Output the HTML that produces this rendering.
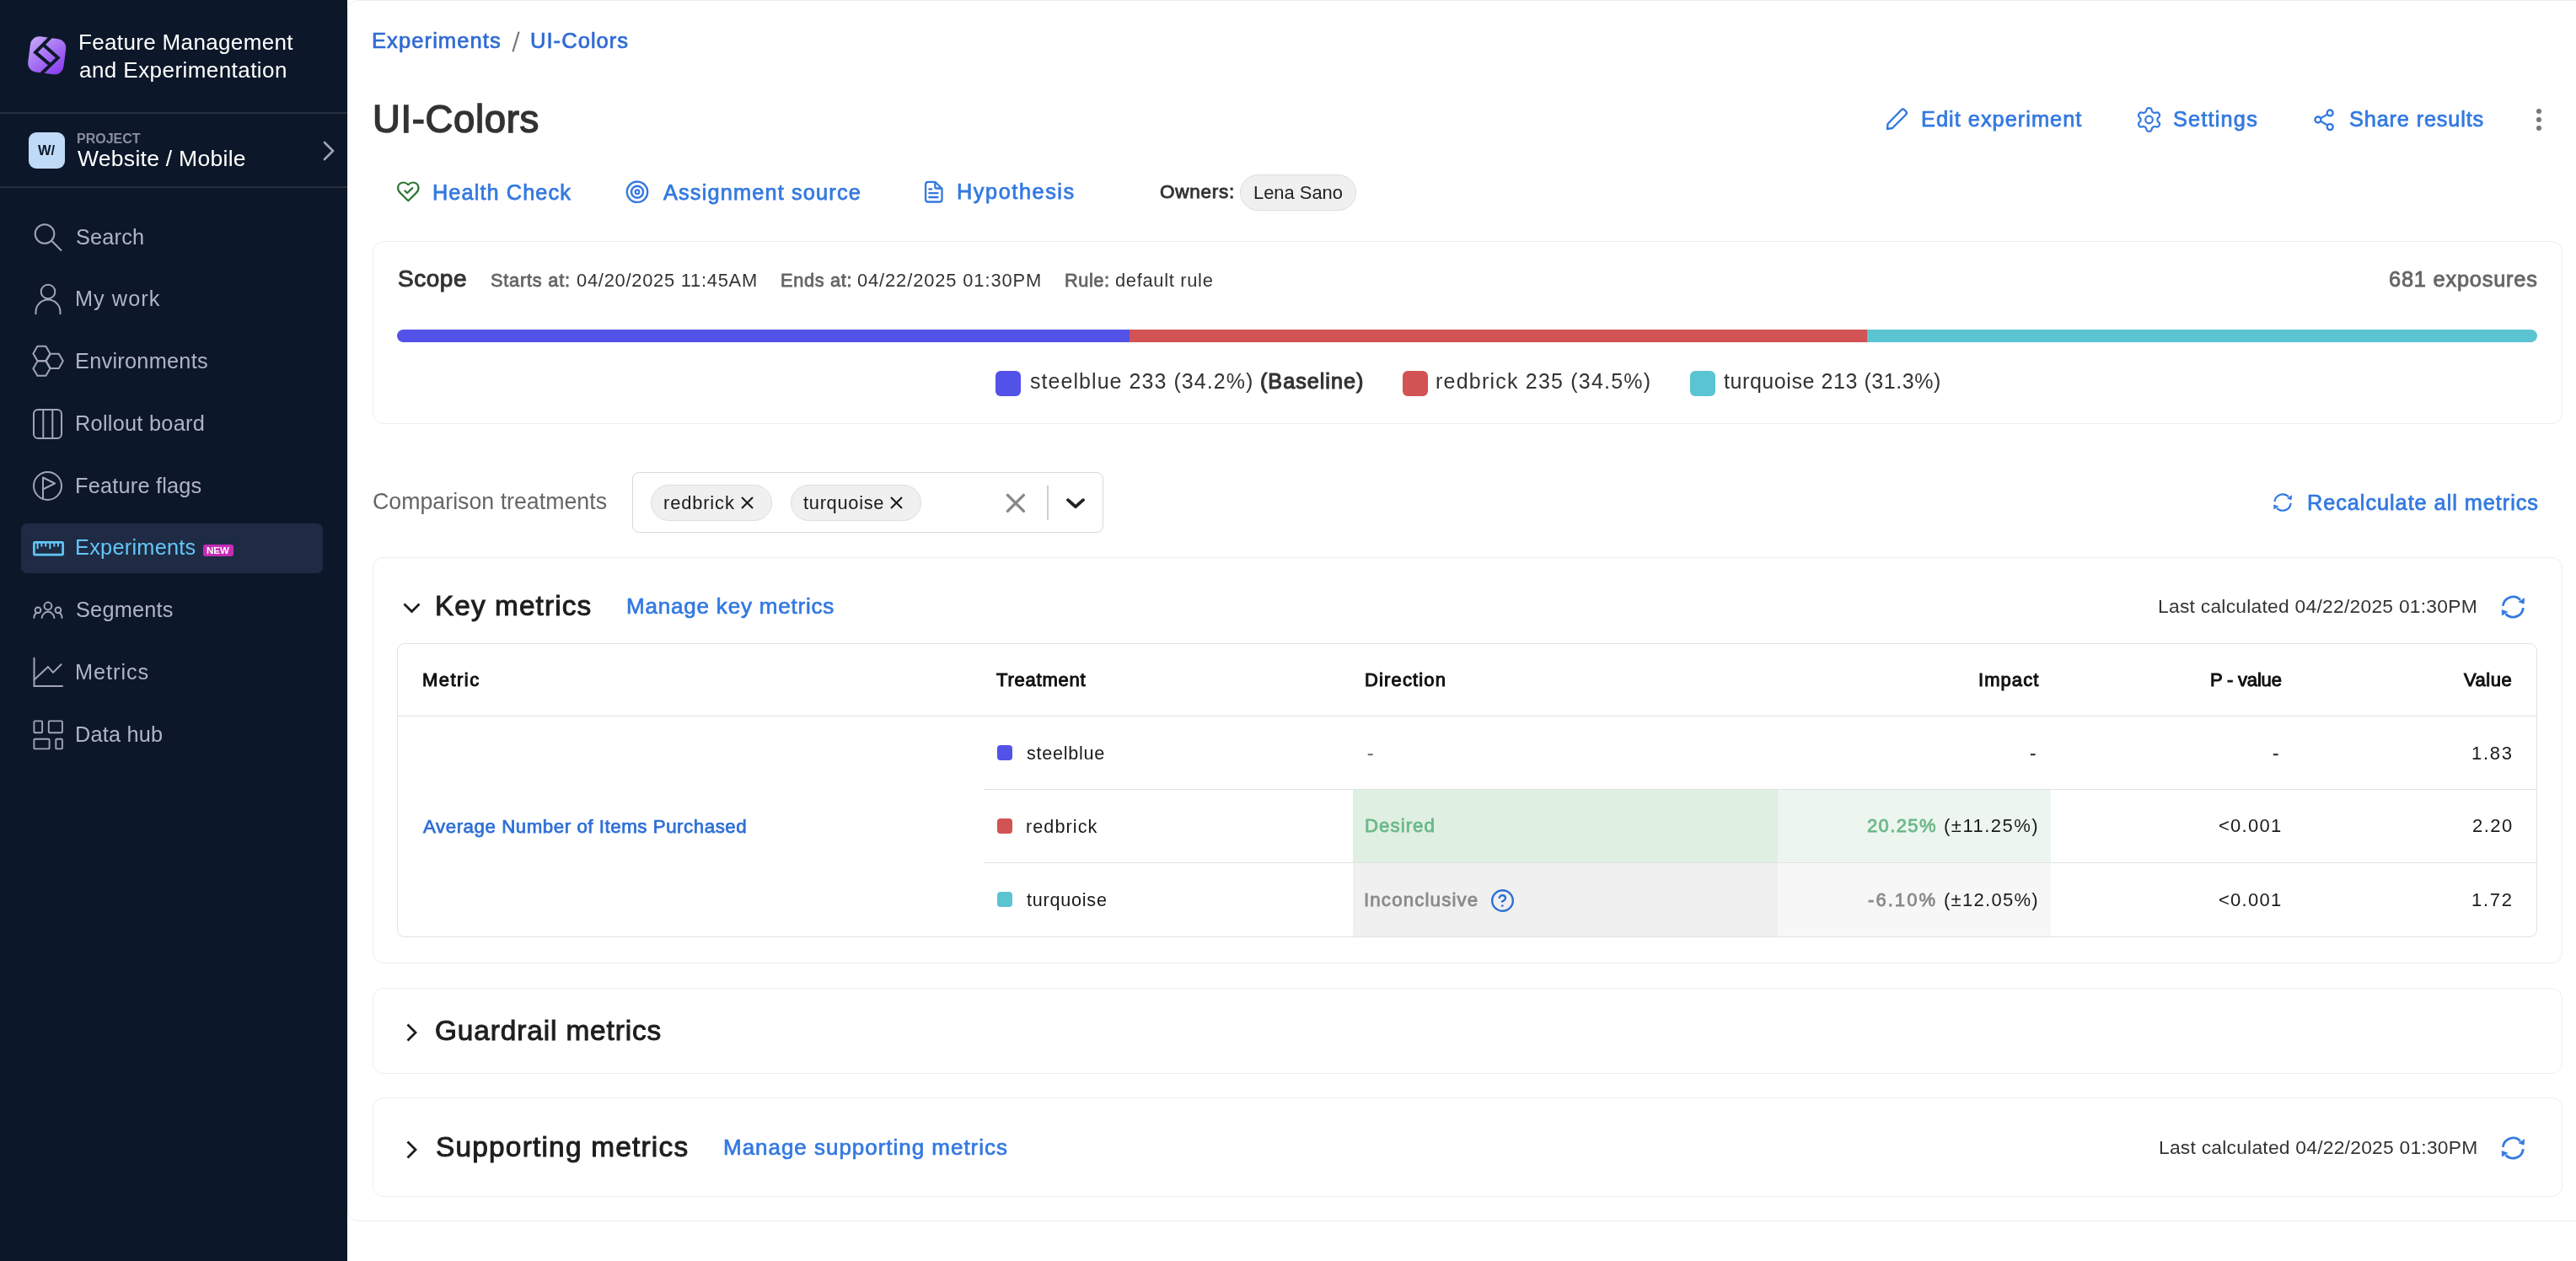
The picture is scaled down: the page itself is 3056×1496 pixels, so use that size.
<!DOCTYPE html>
<html><head><meta charset="utf-8"><title>UI-Colors</title>
<style>
html,body{margin:0;padding:0;width:3056px;height:1496px;overflow:hidden;background:#fff;}
body{position:relative;font-family:"Liberation Sans",sans-serif;}
.t{position:absolute;line-height:1;white-space:nowrap;will-change:transform;}
svg{overflow:visible}
@media (max-width: 2000px) { html { zoom: 0.5; } }
</style></head><body>
<div style="position:absolute;left:0px;top:0px;width:412px;height:1496px;background:#0c1829"></div>
<svg style="position:absolute;left:28px;top:38px;" width="56" height="56" viewBox="0 0 56 56"><defs><linearGradient id="lg" x1="0" y1="0" x2="1" y2="1"><stop offset="0" stop-color="#c9abfa"/><stop offset="1" stop-color="#8436ee"/></linearGradient></defs>
<g transform="rotate(7.5 27.7 27.8)"><rect x="6.4" y="6.6" width="42.6" height="42.4" rx="10.5" fill="url(#lg)"/></g>
<path d="M32.6 5.5 L14 24.1 L31 38.6 M23.6 15.2 L40.8 30.6 L21 49.5" fill="none" stroke="#0c1829" stroke-width="3.9" stroke-linejoin="miter" stroke-miterlimit="10"/></svg>
<div class="t" style="left:93.1px;top:36.9px;font-size:26.0px;color:#ffffff;font-weight:400;letter-spacing:0.346px;">Feature Management</div>
<div class="t" style="left:94.0px;top:70.3px;font-size:26.0px;color:#ffffff;font-weight:400;letter-spacing:0.439px;">and Experimentation</div>
<div style="position:absolute;left:0px;top:133px;width:412px;height:2px;background:#252f40"></div>
<div style="position:absolute;left:34px;top:157px;width:43px;height:43px;background:#bfdaf6;border-radius:9px"></div>
<div class="t" style="left:45.0px;top:170.2px;font-size:16.5px;color:#0c1829;font-weight:700;">W/</div>
<div class="t" style="left:90.6px;top:156.8px;font-size:16.0px;color:#8b8da0;font-weight:700;letter-spacing:-0.003px;">PROJECT</div>
<div class="t" style="left:91.6px;top:174.6px;font-size:26.5px;color:#ffffff;font-weight:400;letter-spacing:0.279px;">Website / Mobile</div>
<svg style="position:absolute;left:380px;top:166px;" width="20" height="26" viewBox="0 0 20 26"><path d="M5 3 L15 13 L5 23" fill="none" stroke="#a3a5b8" stroke-width="2.6" stroke-linecap="round"/></svg>
<div style="position:absolute;left:0px;top:220.5px;width:412px;height:2px;background:#252f40"></div>
<div style="position:absolute;left:25px;top:621px;width:358px;height:59px;background:#1f2b45;border-radius:7px"></div>
<div class="t" style="left:89.6px;top:268.6px;font-size:25.3px;color:#b1b3c7;font-weight:400;letter-spacing:0.189px;">Search</div>
<div class="t" style="left:88.6px;top:342.3px;font-size:25.3px;color:#b1b3c7;font-weight:400;letter-spacing:1.035px;">My work</div>
<div class="t" style="left:88.6px;top:416.1px;font-size:25.3px;color:#b1b3c7;font-weight:400;letter-spacing:0.269px;">Environments</div>
<div class="t" style="left:88.6px;top:489.8px;font-size:25.3px;color:#b1b3c7;font-weight:400;letter-spacing:0.275px;">Rollout board</div>
<div class="t" style="left:88.6px;top:563.6px;font-size:25.3px;color:#b1b3c7;font-weight:400;letter-spacing:0.215px;">Feature flags</div>
<div class="t" style="left:88.6px;top:637.3px;font-size:25.3px;color:#63c6f6;font-weight:400;letter-spacing:0.267px;">Experiments</div>
<div class="t" style="left:89.6px;top:711.1px;font-size:25.3px;color:#b1b3c7;font-weight:400;letter-spacing:0.23px;">Segments</div>
<div class="t" style="left:88.6px;top:784.8px;font-size:25.3px;color:#b1b3c7;font-weight:400;letter-spacing:0.957px;">Metrics</div>
<div class="t" style="left:88.6px;top:858.6px;font-size:25.3px;color:#b1b3c7;font-weight:400;letter-spacing:0.206px;">Data hub</div>
<div style="position:absolute;left:241px;top:646px;width:36px;height:14px;background:#c42db6;border-radius:3px"></div>
<div class="t" style="left:244.5px;top:647.6px;font-size:11.5px;color:#ffffff;font-weight:700;">NEW</div>
<svg style="position:absolute;left:38px;top:262px;" width="40" height="40" viewBox="0 0 40 40"><circle cx="15" cy="15.5" r="11.3" fill="none" stroke="#a2a4b9" stroke-width="2.0"/><path d="M23.3 23.8 L35 35.5" stroke="#a2a4b9" stroke-width="2.0"/></svg>
<svg style="position:absolute;left:38px;top:335px;" width="40" height="40" viewBox="0 0 40 40"><circle cx="19" cy="11" r="8.3" fill="none" stroke="#a2a4b9" stroke-width="2.0"/><path d="M4.5 38 V35 A14.5 14.5 0 0 1 33.5 35 V38" fill="none" stroke="#a2a4b9" stroke-width="2.0"/></svg>
<svg style="position:absolute;left:36px;top:408px;" width="42" height="42" viewBox="0 0 42 42"><path d="M23.40 11.40 L18.40 20.06 L8.40 20.06 L3.40 11.40 L8.40 2.74 L18.40 2.74 Z M38.80 20.30 L33.80 28.96 L23.80 28.96 L18.80 20.30 L23.80 11.64 L33.80 11.64 Z M23.40 29.20 L18.40 37.86 L8.40 37.86 L3.40 29.20 L8.40 20.54 L18.40 20.54 Z" fill="none" stroke="#a2a4b9" stroke-width="2" stroke-linejoin="round"/></svg>
<svg style="position:absolute;left:38px;top:484px;" width="40" height="40" viewBox="0 0 40 40"><rect x="2" y="2" width="33" height="34" rx="5" fill="none" stroke="#a2a4b9" stroke-width="2.0"/><path d="M13.3 2 V36 M24.3 2 V36" stroke="#a2a4b9" stroke-width="2.0"/></svg>
<svg style="position:absolute;left:38px;top:558px;" width="40" height="40" viewBox="0 0 40 40"><circle cx="18.5" cy="18.5" r="16.5" fill="none" stroke="#a2a4b9" stroke-width="2.0"/><path d="M13 35 V8.5 L27 15.5 L13 22.5" fill="none" stroke="#a2a4b9" stroke-width="2.0" stroke-linejoin="round"/></svg>
<svg style="position:absolute;left:38px;top:640px;" width="40" height="22" viewBox="0 0 40 22"><rect x="2.4" y="3.4" width="34.2" height="14.8" rx="1" fill="none" stroke="#63c6f6" stroke-width="2.7"/><path d="M6.6 3.4 V11.2 M11.3 3.4 V8.4 M16.2 3.4 V8.4 M21.3 3.4 V11.2 M26.3 3.4 V8.4 M31 3.4 V8.4" stroke="#63c6f6" stroke-width="2"/></svg>
<svg style="position:absolute;left:34px;top:700px;" width="50" height="40" viewBox="0 0 50 40"><circle cx="22.9" cy="19" r="4.4" fill="none" stroke="#a2a4b9" stroke-width="2"/><circle cx="11" cy="23.8" r="3.4" fill="none" stroke="#a2a4b9" stroke-width="2"/><circle cx="34.9" cy="23.8" r="3.4" fill="none" stroke="#a2a4b9" stroke-width="2"/><path d="M15.6 33 A7.5 8.6 0 0 1 30.4 33 M6.4 33 Q6.6 28.4 9.6 27 M39.5 33 Q39.3 28.4 36.3 27" fill="none" stroke="#a2a4b9" stroke-width="2" stroke-linecap="round"/></svg>
<svg style="position:absolute;left:38px;top:780px;" width="40" height="40" viewBox="0 0 40 40"><path d="M2.5 0.7 V34 H36" fill="none" stroke="#a2a4b9" stroke-width="2.0" stroke-linecap="round"/><path d="M2.5 26.4 L18.9 11.2 L25 17.9 L34.6 8.3" fill="none" stroke="#a2a4b9" stroke-width="2.0" stroke-linecap="round"/></svg>
<svg style="position:absolute;left:38px;top:853px;" width="40" height="40" viewBox="0 0 40 40"><rect x="2.4" y="2.4" width="9.7" height="13.9" rx="1" fill="none" stroke="#a2a4b9" stroke-width="1.9"/><rect x="19.8" y="2.4" width="16.1" height="13.9" rx="1" fill="none" stroke="#a2a4b9" stroke-width="1.9"/><rect x="2.4" y="23.7" width="18.2" height="11.7" rx="1" fill="none" stroke="#a2a4b9" stroke-width="1.9"/><rect x="28.3" y="23.7" width="7.6" height="11.7" rx="1" fill="none" stroke="#a2a4b9" stroke-width="1.9"/></svg>
<div style="position:absolute;left:412px;top:0px;width:2700px;height:1449px;background:#fff;border:1px solid #eeeeee;border-radius:13px;box-sizing:border-box"></div>
<div class="t" style="left:440.7px;top:35.8px;font-size:25.6px;color:#2f6bd3;font-weight:400;letter-spacing:1.054px;-webkit-text-stroke:0.7px #2f6bd3;">Experiments</div>
<svg style="position:absolute;left:600px;top:30px;" width="30" height="40" viewBox="0 0 30 40"><path d="M15.6 7.6 L8.4 31.4" stroke="#777" stroke-width="2.1"/></svg>
<div class="t" style="left:629.4px;top:35.8px;font-size:25.6px;color:#2f6bd3;font-weight:400;letter-spacing:1.01px;-webkit-text-stroke:0.7px #2f6bd3;">UI-Colors</div>
<div class="t" style="left:442.0px;top:119.3px;font-size:45.5px;color:#333;font-weight:400;letter-spacing:0.649px;-webkit-text-stroke:1.5px #333;">UI-Colors</div>
<svg style="position:absolute;left:2236px;top:127px;" width="28" height="28" viewBox="0 0 28 28"><path d="M19.5 3.5 Q21.5 1.5 23.5 3.5 L25 5 Q27 7 25 9 L9 25 L3 26 L3.5 20 Z" fill="none" stroke="#3379e0" stroke-width="2.4" stroke-linejoin="round"/></svg>
<div class="t" style="left:2279.0px;top:128.6px;font-size:25.3px;color:#3379e0;font-weight:400;letter-spacing:1.04px;-webkit-text-stroke:0.75px #3379e0;">Edit experiment</div>
<svg style="position:absolute;left:2528px;top:120px;" width="44" height="44" viewBox="0 0 44 44"><path d="M31.50 22.00 L31.50 22.26 L31.51 22.52 L31.53 22.79 L31.57 23.06 L31.64 23.33 L31.76 23.62 L31.94 23.94 L32.22 24.28 L32.58 24.66 L32.99 25.08 L33.39 25.52 L33.71 25.97 L33.92 26.40 L34.02 26.81 L34.04 27.19 L33.99 27.56 L33.90 27.91 L33.77 28.25 L33.62 28.58 L33.45 28.90 L33.26 29.21 L33.05 29.50 L32.82 29.78 L32.56 30.04 L32.27 30.26 L31.93 30.44 L31.52 30.56 L31.04 30.59 L30.50 30.54 L29.91 30.41 L29.34 30.27 L28.83 30.14 L28.40 30.08 L28.03 30.07 L27.73 30.11 L27.45 30.19 L27.20 30.29 L26.96 30.41 L26.73 30.53 L26.50 30.66 L26.27 30.79 L26.05 30.93 L25.83 31.08 L25.62 31.25 L25.41 31.45 L25.22 31.69 L25.05 32.01 L24.89 32.42 L24.74 32.93 L24.58 33.49 L24.40 34.06 L24.17 34.56 L23.90 34.96 L23.60 35.25 L23.27 35.46 L22.93 35.60 L22.58 35.69 L22.22 35.75 L21.86 35.79 L21.50 35.80 L21.14 35.79 L20.78 35.75 L20.42 35.69 L20.07 35.60 L19.73 35.46 L19.40 35.25 L19.10 34.96 L18.83 34.56 L18.60 34.06 L18.42 33.49 L18.26 32.93 L18.11 32.42 L17.95 32.01 L17.78 31.69 L17.59 31.45 L17.38 31.25 L17.17 31.08 L16.95 30.93 L16.73 30.79 L16.50 30.66 L16.27 30.53 L16.04 30.41 L15.80 30.29 L15.55 30.19 L15.27 30.11 L14.97 30.07 L14.60 30.08 L14.17 30.14 L13.66 30.27 L13.09 30.41 L12.50 30.54 L11.96 30.59 L11.48 30.56 L11.07 30.44 L10.73 30.26 L10.44 30.04 L10.18 29.78 L9.95 29.50 L9.74 29.21 L9.55 28.90 L9.38 28.58 L9.23 28.25 L9.10 27.91 L9.01 27.56 L8.96 27.19 L8.98 26.81 L9.08 26.40 L9.29 25.97 L9.61 25.52 L10.01 25.08 L10.42 24.66 L10.78 24.28 L11.06 23.94 L11.24 23.62 L11.36 23.33 L11.43 23.06 L11.47 22.79 L11.49 22.52 L11.50 22.26 L11.50 22.00 L11.50 21.74 L11.49 21.48 L11.47 21.21 L11.43 20.94 L11.36 20.67 L11.24 20.38 L11.06 20.06 L10.78 19.72 L10.42 19.34 L10.01 18.92 L9.61 18.48 L9.29 18.03 L9.08 17.60 L8.98 17.19 L8.96 16.81 L9.01 16.44 L9.10 16.09 L9.23 15.75 L9.38 15.42 L9.55 15.10 L9.74 14.79 L9.95 14.50 L10.18 14.22 L10.44 13.96 L10.73 13.74 L11.07 13.56 L11.48 13.44 L11.96 13.41 L12.50 13.46 L13.09 13.59 L13.66 13.73 L14.17 13.86 L14.60 13.92 L14.97 13.93 L15.27 13.89 L15.55 13.81 L15.80 13.71 L16.04 13.59 L16.27 13.47 L16.50 13.34 L16.73 13.21 L16.95 13.07 L17.17 12.92 L17.38 12.75 L17.59 12.55 L17.78 12.31 L17.95 11.99 L18.11 11.58 L18.26 11.07 L18.42 10.51 L18.60 9.94 L18.83 9.44 L19.10 9.04 L19.40 8.75 L19.73 8.54 L20.07 8.40 L20.42 8.31 L20.78 8.25 L21.14 8.21 L21.50 8.20 L21.86 8.21 L22.22 8.25 L22.58 8.31 L22.93 8.40 L23.27 8.54 L23.60 8.75 L23.90 9.04 L24.17 9.44 L24.40 9.94 L24.58 10.51 L24.74 11.07 L24.89 11.58 L25.05 11.99 L25.22 12.31 L25.41 12.55 L25.62 12.75 L25.83 12.92 L26.05 13.07 L26.27 13.21 L26.50 13.34 L26.73 13.47 L26.96 13.59 L27.20 13.71 L27.45 13.81 L27.73 13.89 L28.03 13.93 L28.40 13.92 L28.83 13.86 L29.34 13.73 L29.91 13.59 L30.50 13.46 L31.04 13.41 L31.52 13.44 L31.93 13.56 L32.27 13.74 L32.56 13.96 L32.82 14.22 L33.05 14.50 L33.26 14.79 L33.45 15.10 L33.62 15.42 L33.77 15.75 L33.90 16.09 L33.99 16.44 L34.04 16.81 L34.02 17.19 L33.92 17.60 L33.71 18.03 L33.39 18.48 L32.99 18.92 L32.58 19.34 L32.22 19.72 L31.94 20.06 L31.76 20.38 L31.64 20.67 L31.57 20.94 L31.53 21.21 L31.51 21.48 L31.50 21.74 Z" fill="none" stroke="#3379e0" stroke-width="2.2" stroke-linejoin="round"/><circle cx="21.5" cy="22" r="4.3" fill="none" stroke="#3379e0" stroke-width="2.2"/></svg>
<div class="t" style="left:2578.1px;top:128.6px;font-size:25.3px;color:#3379e0;font-weight:400;letter-spacing:1.197px;-webkit-text-stroke:0.75px #3379e0;">Settings</div>
<svg style="position:absolute;left:2744px;top:127px;" width="28" height="30" viewBox="0 0 28 30"><circle cx="20.2" cy="7" r="3.5" fill="none" stroke="#3379e0" stroke-width="2.3"/><circle cx="5.9" cy="15" r="3.5" fill="none" stroke="#3379e0" stroke-width="2.3"/><circle cx="20.2" cy="23.6" r="3.5" fill="none" stroke="#3379e0" stroke-width="2.3"/><path d="M9 13.2 L17.1 8.8 M9 16.8 L17.1 21.6" stroke="#3379e0" stroke-width="2.3"/></svg>
<div class="t" style="left:2786.8px;top:128.6px;font-size:25.3px;color:#3379e0;font-weight:400;letter-spacing:0.849px;-webkit-text-stroke:0.75px #3379e0;">Share results</div>
<div style="position:absolute;left:3008.5px;top:128.60000000000002px;width:6.4px;height:6.4px;background:#777;border-radius:50%"></div>
<div style="position:absolute;left:3008.5px;top:138.8px;width:6.4px;height:6.4px;background:#777;border-radius:50%"></div>
<div style="position:absolute;left:3008.5px;top:149.10000000000002px;width:6.4px;height:6.4px;background:#777;border-radius:50%"></div>
<svg style="position:absolute;left:460px;top:205px;" width="50" height="45" viewBox="0 0 50 45"><path d="M24.3 33.2 L14.6 23.6 Q11.6 20.6 12.2 16.6 Q13.2 11.9 18.4 11.5 Q21.8 11.4 24.3 14.2 Q26.8 11.4 30.2 11.5 Q35.4 11.9 36.4 16.6 Q37 20.6 34 23.6 Z" fill="none" stroke="#2d7837" stroke-width="2.2" stroke-linejoin="round"/><path d="M20.4 21.4 L23.1 24 L29.2 18.1" fill="none" stroke="#2d7837" stroke-width="2.2" stroke-linecap="round" stroke-linejoin="round"/></svg>
<div class="t" style="left:512.8px;top:215.6px;font-size:25.3px;color:#3379e0;font-weight:400;letter-spacing:1.089px;-webkit-text-stroke:0.75px #3379e0;">Health Check</div>
<svg style="position:absolute;left:741px;top:213px;" width="30" height="30" viewBox="0 0 30 30"><circle cx="15" cy="14.7" r="12.2" fill="none" stroke="#3379e0" stroke-width="2.4"/><circle cx="15" cy="14.7" r="7" fill="none" stroke="#3379e0" stroke-width="2.4"/><circle cx="15" cy="14.7" r="2.3" fill="none" stroke="#3379e0" stroke-width="2.2"/></svg>
<div class="t" style="left:786.9px;top:215.6px;font-size:25.3px;color:#3379e0;font-weight:400;letter-spacing:1.167px;-webkit-text-stroke:0.75px #3379e0;">Assignment source</div>
<svg style="position:absolute;left:1088px;top:208px;" width="40" height="40" viewBox="0 0 40 40"><path d="M13.2 7.8 H21.3 L29.5 15.8 V28.4 Q29.5 31.5 26.4 31.5 H13.2 Q10.1 31.5 10.1 28.4 V10.9 Q10.1 7.8 13.2 7.8 Z M21.3 7.8 V13.4 Q21.3 15.5 23.4 15.5 H29.5" fill="none" stroke="#3379e0" stroke-width="2.3" stroke-linejoin="round"/><path d="M14.3 16.3 H17.2 M14.3 21.1 H24.6 M14.3 26 H24.6" stroke="#3379e0" stroke-width="2.3" stroke-linecap="round"/></svg>
<div class="t" style="left:1135.3px;top:215.1px;font-size:25.3px;color:#3379e0;font-weight:400;letter-spacing:1.561px;-webkit-text-stroke:0.75px #3379e0;">Hypothesis</div>
<div class="t" style="left:1376.0px;top:216.9px;font-size:22.5px;color:#333;font-weight:400;letter-spacing:0.74px;-webkit-text-stroke:0.9px #333;">Owners:</div>
<div style="position:absolute;left:1471px;top:207px;width:138px;height:43px;background:#f0f0f0;border:1.5px solid #dcdcdc;border-radius:22px;box-sizing:border-box"></div>
<div class="t" style="left:1486.7px;top:217.5px;font-size:21.9px;color:#222;font-weight:400;">Lena Sano</div>
<div style="position:absolute;left:442px;top:286px;width:2598px;height:217px;border:1px solid #eeeeee;border-radius:13px;box-sizing:border-box"></div>
<div class="t" style="left:471.9px;top:317.1px;font-size:28.0px;color:#333;font-weight:400;letter-spacing:0.542px;-webkit-text-stroke:1.0px #333;">Scope</div>
<div class="t" style="left:582.4px;top:321.9px;font-size:21.8px;color:#666;font-weight:400;letter-spacing:0.765px;-webkit-text-stroke:0.8px #666;">Starts at:</div>
<div class="t" style="left:684.1px;top:321.9px;font-size:21.9px;color:#333;font-weight:400;letter-spacing:0.734px;">04/20/2025 11:45AM</div>
<div class="t" style="left:926.1px;top:321.9px;font-size:21.8px;color:#666;font-weight:400;letter-spacing:0.644px;-webkit-text-stroke:0.8px #666;">Ends at:</div>
<div class="t" style="left:1017.1px;top:321.9px;font-size:21.9px;color:#333;font-weight:400;letter-spacing:0.879px;">04/22/2025 01:30PM</div>
<div class="t" style="left:1263.1px;top:321.9px;font-size:21.8px;color:#666;font-weight:400;letter-spacing:0.539px;-webkit-text-stroke:0.8px #666;">Rule:</div>
<div class="t" style="left:1323.1px;top:321.9px;font-size:21.9px;color:#333;font-weight:400;letter-spacing:0.683px;">default rule</div>
<div class="t" style="left:2834.2px;top:318.7px;font-size:25.4px;color:#666;font-weight:400;letter-spacing:0.774px;-webkit-text-stroke:0.85px #666;">681 exposures</div>
<div style="position:absolute;left:471px;top:391px;width:2539px;height:15px;border-radius:8px;background:linear-gradient(to right,#5352e8 0,#5352e8 868.8px,#d25353 868.8px,#d25353 1744.5px,#5bc4d3 1744.5px)"></div>
<div style="position:absolute;left:1181px;top:440px;width:30px;height:30px;background:#5352e8;border-radius:6px"></div>
<div class="t" style="left:1222.1px;top:440.3px;font-size:25.0px;color:#333;font-weight:400;letter-spacing:1.053px;">steelblue 233 (34.2%)</div>
<div class="t" style="left:1494.5px;top:440.2px;font-size:25.2px;color:#333;font-weight:400;letter-spacing:0.987px;-webkit-text-stroke:1.1px #333;">(Baseline)</div>
<div style="position:absolute;left:1664px;top:440px;width:30px;height:30px;background:#d25353;border-radius:6px"></div>
<div class="t" style="left:1703.0px;top:440.3px;font-size:25.0px;color:#333;font-weight:400;letter-spacing:1.215px;">redbrick 235 (34.5%)</div>
<div style="position:absolute;left:2004.7px;top:440px;width:30px;height:30px;background:#5bc4d3;border-radius:6px"></div>
<div class="t" style="left:2045.0px;top:440.3px;font-size:25.0px;color:#333;font-weight:400;letter-spacing:0.572px;">turquoise 213 (31.3%)</div>
<div class="t" style="left:442.0px;top:582.1px;font-size:26.75px;color:#666;font-weight:400;">Comparison treatments</div>
<div style="position:absolute;left:750.4px;top:560.4px;width:558.4px;height:71.2px;border:1.5px solid #d9d9d9;border-radius:8px;box-sizing:border-box"></div>
<div style="position:absolute;left:771.7px;top:575px;width:144px;height:43px;background:#f0f0f0;border:1.5px solid #dddddd;border-radius:22px;box-sizing:border-box"></div>
<div class="t" style="left:786.9px;top:585.5px;font-size:21.9px;color:#1a1a1a;font-weight:400;letter-spacing:0.853px;">redbrick</div>
<svg style="position:absolute;left:877px;top:587px;" width="20" height="20" viewBox="0 0 20 20"><path d="M3 3 L16 16 M16 3 L3 16" stroke="#1a1a1a" stroke-width="2.1"/></svg>
<div style="position:absolute;left:938.4px;top:575px;width:154.4px;height:43px;background:#f0f0f0;border:1.5px solid #dddddd;border-radius:22px;box-sizing:border-box"></div>
<div class="t" style="left:953.0px;top:585.5px;font-size:21.9px;color:#1a1a1a;font-weight:400;letter-spacing:0.687px;">turquoise</div>
<svg style="position:absolute;left:1053.5px;top:587px;" width="20" height="20" viewBox="0 0 20 20"><path d="M3 3 L16 16 M16 3 L3 16" stroke="#1a1a1a" stroke-width="2.1"/></svg>
<svg style="position:absolute;left:1192px;top:584px;" width="26" height="26" viewBox="0 0 26 26"><path d="M3.4 3.4 L22.4 22.4 M22.4 3.4 L3.4 22.4" stroke="#888" stroke-width="3.4" stroke-linecap="round"/></svg>
<div style="position:absolute;left:1242px;top:576px;width:2px;height:41px;background:#cfcfcf"></div>
<svg style="position:absolute;left:1262px;top:586px;" width="28" height="22" viewBox="0 0 28 22"><path d="M5 7.2 L14 15.2 L23 7.2" fill="none" stroke="#222" stroke-width="3.8" stroke-linecap="round" stroke-linejoin="round"/></svg>
<svg style="position:absolute;left:2683.4px;top:576px;" width="48.0" height="40.0" viewBox="0 0 60 50"><path d="M19.4 23.95 A12 12 0 0 1 40.0 16.7 M43.3 26.05 A12 12 0 0 1 22.6 33.3" fill="none" stroke="#3379e0" stroke-width="2.7"/><path d="M38.2 19.0 L44.8 14.8 L44.0 21.2 Z M24.6 30.9 L18.2 28.6 L18.4 35.0 Z" fill="#3379e0" stroke="#3379e0" stroke-width="0.8" stroke-linejoin="round"/></svg>
<div class="t" style="left:2737.0px;top:583.6px;font-size:25.3px;color:#3379e0;font-weight:400;letter-spacing:0.95px;-webkit-text-stroke:0.75px #3379e0;">Recalculate all metrics</div>
<div style="position:absolute;left:442px;top:661px;width:2598px;height:482px;border:1px solid #eeeeee;border-radius:13px;box-sizing:border-box"></div>
<svg style="position:absolute;left:476px;top:710px;" width="26" height="22" viewBox="0 0 26 22"><path d="M3.5 6.5 L12.5 15.5 L21.5 6.5" fill="none" stroke="#1b1b1b" stroke-width="2.8"/></svg>
<div class="t" style="left:515.7px;top:701.5px;font-size:33.4px;color:#1e1e1e;font-weight:400;letter-spacing:1.069px;-webkit-text-stroke:1.0px #1e1e1e;">Key metrics</div>
<div class="t" style="left:743.2px;top:706.0px;font-size:26.0px;color:#3379e0;font-weight:400;letter-spacing:0.807px;-webkit-text-stroke:0.7px #3379e0;">Manage key metrics</div>
<div class="t" style="left:2560.1px;top:707.7px;font-size:22.8px;color:#333;font-weight:400;letter-spacing:0.261px;">Last calculated 04/22/2025 01:30PM</div>
<svg style="position:absolute;left:2950px;top:695px;" width="60.0" height="50.0" viewBox="0 0 60 50"><path d="M19.4 23.95 A12 12 0 0 1 40.0 16.7 M43.3 26.05 A12 12 0 0 1 22.6 33.3" fill="none" stroke="#3379e0" stroke-width="2.8"/><path d="M38.2 19.0 L44.8 14.8 L44.0 21.2 Z M24.6 30.9 L18.2 28.6 L18.4 35.0 Z" fill="#3379e0" stroke="#3379e0" stroke-width="0.8" stroke-linejoin="round"/></svg>
<div style="position:absolute;left:471px;top:763px;width:2539px;height:349px;border:1px solid #e2e2e2;border-radius:9px;box-sizing:border-box;overflow:hidden"></div>
<div style="position:absolute;left:472px;top:849px;width:2537px;height:1px;background:#e2e2e2"></div>
<div style="position:absolute;left:1167px;top:936px;width:1842px;height:1px;background:#e2e2e2"></div>
<div style="position:absolute;left:1167px;top:1023px;width:1842px;height:1px;background:#e2e2e2"></div>
<div style="position:absolute;left:1605px;top:937px;width:504px;height:86px;background:#dff0e3"></div>
<div style="position:absolute;left:2109px;top:937px;width:324px;height:86px;background:#ecf6ef"></div>
<div style="position:absolute;left:1605px;top:1024px;width:504px;height:87px;background:#f0f0f0"></div>
<div style="position:absolute;left:2109px;top:1024px;width:324px;height:87px;background:#f7f7f7"></div>
<div class="t" style="left:500.9px;top:796.2px;font-size:22.0px;color:#111;font-weight:400;letter-spacing:1.465px;-webkit-text-stroke:1.0px #111;">Metric</div>
<div class="t" style="left:1182.0px;top:796.2px;font-size:22.0px;color:#111;font-weight:400;letter-spacing:0.777px;-webkit-text-stroke:1.0px #111;">Treatment</div>
<div class="t" style="left:1618.7px;top:796.2px;font-size:22.0px;color:#111;font-weight:400;letter-spacing:1.144px;-webkit-text-stroke:1.0px #111;">Direction</div>
<div class="t" style="left:2347.3px;top:796.2px;font-size:22.0px;color:#111;font-weight:400;letter-spacing:1.06px;-webkit-text-stroke:1.0px #111;">Impact</div>
<div class="t" style="left:2622.2px;top:796.2px;font-size:22.0px;color:#111;font-weight:400;letter-spacing:-0.194px;-webkit-text-stroke:1.0px #111;">P - value</div>
<div class="t" style="left:2923.4px;top:796.2px;font-size:22.0px;color:#111;font-weight:400;letter-spacing:0.507px;-webkit-text-stroke:1.0px #111;">Value</div>
<div class="t" style="left:502.3px;top:970.0px;font-size:22.3px;color:#2f6fd6;font-weight:400;letter-spacing:0.539px;-webkit-text-stroke:0.75px #2f6fd6;">Average Number of Items Purchased</div>
<div style="position:absolute;left:1182.8px;top:884.3px;width:18px;height:18px;background:#5352e8;border-radius:4px"></div>
<div class="t" style="left:1217.6px;top:883.0px;font-size:21.6px;color:#1a1a1a;font-weight:400;letter-spacing:0.72px;">steelblue</div>
<div style="position:absolute;left:1182.8px;top:970.8px;width:18px;height:18px;background:#d25353;border-radius:4px"></div>
<div class="t" style="left:1216.7px;top:969.5px;font-size:21.6px;color:#1a1a1a;font-weight:400;letter-spacing:1.074px;">redbrick</div>
<div style="position:absolute;left:1182.8px;top:1058.4px;width:18px;height:18px;background:#5bc4d3;border-radius:4px"></div>
<div class="t" style="left:1217.9px;top:1057.1px;font-size:21.6px;color:#1a1a1a;font-weight:400;letter-spacing:0.764px;">turquoise</div>
<div class="t" style="left:1622.3px;top:882.7px;font-size:22px;color:#777;font-weight:400;-webkit-text-stroke:0.5px #777;">-</div>
<div class="t" style="left:2407.7px;top:882.7px;font-size:22px;color:#333;font-weight:400;-webkit-text-stroke:0.3px #333;">-</div>
<div class="t" style="left:2695.7px;top:882.7px;font-size:22px;color:#333;font-weight:400;-webkit-text-stroke:0.3px #333;">-</div>
<div class="t" style="left:2932.3px;top:882.7px;font-size:22.0px;color:#1a1a1a;font-weight:400;letter-spacing:1.698px;">1.83</div>
<div class="t" style="left:1618.6px;top:968.9px;font-size:22.3px;color:#6cb88a;font-weight:400;letter-spacing:1.018px;-webkit-text-stroke:0.8px #6cb88a;">Desired</div>
<div class="t" style="left:2214.9px;top:969.2px;font-size:22.0px;color:#6cb88a;font-weight:400;letter-spacing:1.378px;-webkit-text-stroke:0.8px #6cb88a;">20.25%</div>
<div class="t" style="left:2306.2px;top:969.2px;font-size:22.0px;color:#1a1a1a;font-weight:400;letter-spacing:1.492px;">(±11.25%)</div>
<div class="t" style="left:2631.9px;top:969.2px;font-size:22.0px;color:#1a1a1a;font-weight:400;letter-spacing:1.255px;">&lt;0.001</div>
<div class="t" style="left:2932.9px;top:969.2px;font-size:22.0px;color:#1a1a1a;font-weight:400;letter-spacing:1.478px;">2.20</div>
<div class="t" style="left:1618.3px;top:1056.5px;font-size:22.3px;color:#8a8a8a;font-weight:400;letter-spacing:1.137px;-webkit-text-stroke:0.8px #8a8a8a;">Inconclusive</div>
<svg style="position:absolute;left:1767px;top:1053px;" width="31" height="31" viewBox="0 0 31 31"><circle cx="15.5" cy="15.5" r="12.3" fill="none" stroke="#2f6fd6" stroke-width="2.4"/><path d="M11.7 12 Q12.8 9 15.4 9 Q19 9.2 19 12.6 Q19 14.8 14.9 16.6" fill="none" stroke="#2f6fd6" stroke-width="2.3" stroke-linecap="round"/><circle cx="15.3" cy="21.6" r="1.35" fill="#2f6fd6"/></svg>
<div class="t" style="left:2216.4px;top:1056.8px;font-size:22.0px;color:#8a8a8a;font-weight:400;letter-spacing:2.055px;-webkit-text-stroke:0.8px #8a8a8a;">-6.10%</div>
<div class="t" style="left:2306.2px;top:1056.8px;font-size:22.0px;color:#1a1a1a;font-weight:400;letter-spacing:1.293px;">(±12.05%)</div>
<div class="t" style="left:2631.9px;top:1056.8px;font-size:22.0px;color:#1a1a1a;font-weight:400;letter-spacing:1.255px;">&lt;0.001</div>
<div class="t" style="left:2932.3px;top:1056.8px;font-size:22.0px;color:#1a1a1a;font-weight:400;letter-spacing:1.753px;">1.72</div>
<div style="position:absolute;left:442px;top:1172px;width:2598px;height:102px;border:1px solid #eeeeee;border-radius:13px;box-sizing:border-box"></div>
<svg style="position:absolute;left:478px;top:1211px;" width="22" height="28" viewBox="0 0 22 28"><path d="M5.5 4.5 L15 14 L5.5 23.5" fill="none" stroke="#1b1b1b" stroke-width="2.8"/></svg>
<div class="t" style="left:516.3px;top:1205.5px;font-size:33.4px;color:#1e1e1e;font-weight:400;letter-spacing:0.88px;-webkit-text-stroke:1.0px #1e1e1e;">Guardrail metrics</div>
<div style="position:absolute;left:442px;top:1302px;width:2598px;height:118px;border:1px solid #eeeeee;border-radius:13px;box-sizing:border-box"></div>
<svg style="position:absolute;left:478px;top:1350px;" width="22" height="28" viewBox="0 0 22 28"><path d="M5.5 4.5 L15 14 L5.5 23.5" fill="none" stroke="#1b1b1b" stroke-width="2.8"/></svg>
<div class="t" style="left:516.5px;top:1343.7px;font-size:33.4px;color:#1e1e1e;font-weight:400;letter-spacing:1.218px;-webkit-text-stroke:1.0px #1e1e1e;">Supporting metrics</div>
<div class="t" style="left:858.2px;top:1348.0px;font-size:26.0px;color:#3379e0;font-weight:400;letter-spacing:0.972px;-webkit-text-stroke:0.7px #3379e0;">Manage supporting metrics</div>
<div class="t" style="left:2560.5px;top:1349.8px;font-size:22.8px;color:#333;font-weight:400;letter-spacing:0.246px;">Last calculated 04/22/2025 01:30PM</div>
<svg style="position:absolute;left:2950px;top:1336.5px;" width="60.0" height="50.0" viewBox="0 0 60 50"><path d="M19.4 23.95 A12 12 0 0 1 40.0 16.7 M43.3 26.05 A12 12 0 0 1 22.6 33.3" fill="none" stroke="#3379e0" stroke-width="2.8"/><path d="M38.2 19.0 L44.8 14.8 L44.0 21.2 Z M24.6 30.9 L18.2 28.6 L18.4 35.0 Z" fill="#3379e0" stroke="#3379e0" stroke-width="0.8" stroke-linejoin="round"/></svg>
</body></html>
